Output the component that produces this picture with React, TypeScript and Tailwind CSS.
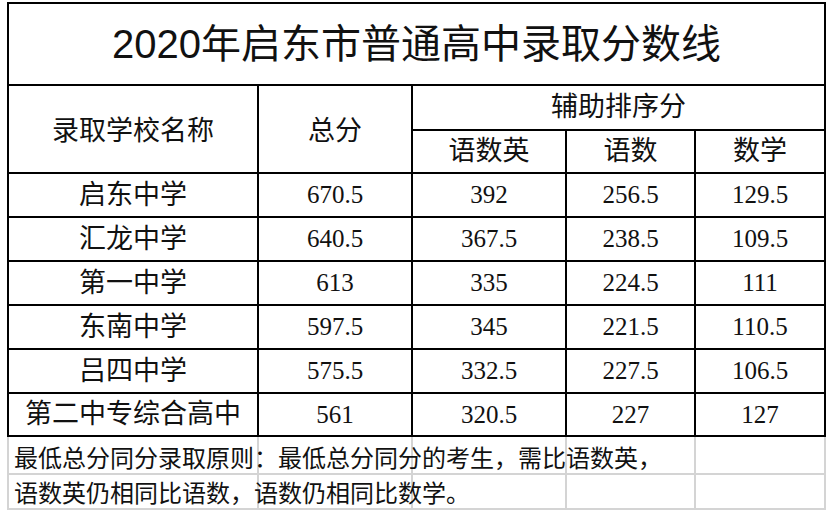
import React from "react";

const rows = [
  ["启东中学", "670.5", "392", "256.5", "129.5"],
  ["汇龙中学", "640.5", "367.5", "238.5", "109.5"],
  ["第一中学", "613", "335", "224.5", "111"],
  ["东南中学", "597.5", "345", "221.5", "110.5"],
  ["吕四中学", "575.5", "332.5", "227.5", "106.5"],
  ["第二中专综合高中", "561", "320.5", "227", "127"],
];

const serif = "font-['Liberation_Serif','Noto_Sans_CJK_SC',serif]";

const App = () => {
  return (
    <div className="w-[830px] h-[514px] bg-white text-[#111] overflow-hidden">
      <div className="ml-[7px] mt-[2px] w-[819px]">
        {/* TABLE */}
        <div className="border-l-2 border-t-2 border-black">
          <div className="h-[82px] border-r-2 border-b-2 border-black flex items-center justify-center font-['Liberation_Sans','Noto_Sans_CJK_SC',sans-serif] text-[40px] leading-none">
            2020年启东市普通高中录取分数线
          </div>

          <div className={`grid grid-cols-[250px_154px_154px_129px_130px] ${serif}`}>
            {/* HEADER */}
            <div className="row-span-2 h-[88px] border-r-2 border-b-2 border-black flex items-center justify-center text-[27px] pt-[4px]">
              录取学校名称
            </div>
            <div className="row-span-2 border-r-2 border-b-2 border-black flex items-center justify-center text-[27px] pt-[4px]">
              总分
            </div>
            <div className="col-span-3 h-[45px] border-r-2 border-b-2 border-black flex items-center justify-center text-[27px]">
              辅助排序分
            </div>
            <div className="h-[43px] border-r-2 border-b-2 border-black flex items-center justify-center text-[27px]">
              语数英
            </div>
            <div className="border-r-2 border-b-2 border-black flex items-center justify-center text-[27px]">
              语数
            </div>
            <div className="border-r-2 border-b-2 border-black flex items-center justify-center text-[27px]">
              数学
            </div>

            {/* ROWS */}
            {rows.map((r, i) =>
              r.map((c, j) => (
                <div
                  key={`${i}-${j}`}
                  className={`${i === rows.length - 1 ? "h-[43px]" : "h-[44px]"} border-r-2 border-b-2 border-black flex items-center justify-center ${
                    j === 0 ? "text-[27px]" : "text-[25px]"
                  }`}>
                  {c}
                </div>
              ))
            )}
          </div>
        </div>

        {/* FOOTNOTE */}
        <div className="border-l-2 border-[#d4d4d4] grid grid-cols-[250px_154px_154px_129px_130px] font-['Noto_Sans_CJK_SC',sans-serif] text-[24px] leading-none">
          <div className="relative z-10 h-[38px] border-r-2 border-b-2 border-[#d4d4d4] flex items-center pl-[5px] pt-[4px] whitespace-nowrap">
            最低总分同分录取原则：最低总分同分的考生，需比语数英，
          </div>
          <div className="border-r-2 border-b-2 border-[#d4d4d4]" />
          <div className="border-r-2 border-b-2 border-[#d4d4d4]" />
          <div className="border-r-2 border-b-2 border-[#d4d4d4]" />
          <div className="border-r-2 border-b-2 border-[#d4d4d4]" />
          <div className="relative z-10 h-[35px] border-r-2 border-b-2 border-[#d4d4d4] flex items-center pl-[5px] whitespace-nowrap">
            语数英仍相同比语数，语数仍相同比数学。
          </div>
          <div className="border-r-2 border-b-2 border-[#d4d4d4]" />
          <div className="border-r-2 border-b-2 border-[#d4d4d4]" />
          <div className="border-r-2 border-b-2 border-[#d4d4d4]" />
          <div className="border-r-2 border-b-2 border-[#d4d4d4]" />
        </div>
      </div>
    </div>
  );
};

export default App;
